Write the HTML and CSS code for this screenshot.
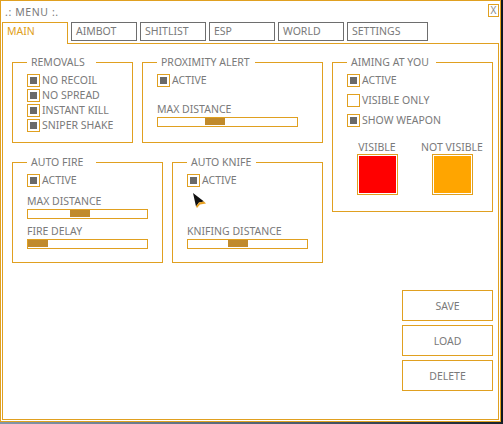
FILE: index.html
```html
<!DOCTYPE html>
<html>
<head>
<meta charset="utf-8">
<link rel="stylesheet" href="styles.css">
</head>
<body>
<div class="window">
  <div class="titlebar">
    <span class="title">.: MENU :.</span>
    <span class="close">X</span>
  </div>
  <div class="tabs">
    <div class="tab active">MAIN</div>
    <div class="tab">AIMBOT</div>
    <div class="tab">SHITLIST</div>
    <div class="tab">ESP</div>
    <div class="tab">WORLD</div>
    <div class="tab wide">SETTINGS</div>
  </div>
  <div class="panel">
    <div class="col-left">
      <div class="row">
        <section class="group g-removals">
          <div class="legend">REMOVALS</div>
          <div class="checks">
            <div class="check"><span class="box on"></span><span>NO RECOIL</span></div>
            <div class="check"><span class="box on"></span><span>NO SPREAD</span></div>
            <div class="check"><span class="box on"></span><span>INSTANT KILL</span></div>
            <div class="check"><span class="box on"></span><span>SNIPER SHAKE</span></div>
          </div>
        </section>
        <section class="group g-prox">
          <div class="legend legend-prox">PROXIMITY ALERT</div>
          <div class="checks">
            <div class="check"><span class="box on"></span><span>ACTIVE</span></div>
          </div>
          <div class="label l-prox">MAX DISTANCE</div>
          <div class="slider s-wide"><div class="thumb" style="margin-left:47px"></div></div>
        </section>
      </div>
      <div class="row row-bottom">
        <section class="group g-auto">
          <div class="legend">AUTO FIRE</div>
          <div class="checks">
            <div class="check"><span class="box on"></span><span>ACTIVE</span></div>
          </div>
          <div class="label l-first">MAX DISTANCE</div>
          <div class="slider"><div class="thumb" style="margin-left:42px"></div></div>
          <div class="label l-second">FIRE DELAY</div>
          <div class="slider"><div class="thumb" style="margin-left:0px"></div></div>
        </section>
        <section class="group g-auto">
          <div class="legend">AUTO KNIFE</div>
          <div class="checks">
            <div class="check"><span class="box on"></span><span>ACTIVE</span></div>
          </div>
          <div class="spacer">
            <svg class="cursor" width="14" height="15" viewBox="0 0 14 15">
              <polygon points="0,0 11,8.5 6,9.5 3,13.5" fill="#111"/>
              <polygon points="3,13.5 6,9.5 11,8.5 13,10.5 7,11.5 4,15" fill="#e8a020"/>
            </svg>
          </div>
          <div class="label">KNIFING DISTANCE</div>
          <div class="slider"><div class="thumb" style="margin-left:40px"></div></div>
        </section>
      </div>
    </div>
    <div class="col-right">
      <section class="group g-aim">
        <div class="legend legend-aim">AIMING AT YOU</div>
        <div class="checks spaced">
          <div class="check"><span class="box on"></span><span>ACTIVE</span></div>
          <div class="check"><span class="box"></span><span>VISIBLE ONLY</span></div>
          <div class="check"><span class="box on"></span><span>SHOW WEAPON</span></div>
        </div>
        <div class="swatches">
          <div class="swatch">
            <span class="swatch-label">VISIBLE</span>
            <span class="color red"></span>
          </div>
          <div class="swatch">
            <span class="swatch-label">NOT VISIBLE</span>
            <span class="color orange"></span>
          </div>
        </div>
      </section>
      <div class="buttons">
        <div class="btn">SAVE</div>
        <div class="btn">LOAD</div>
        <div class="btn">DELETE</div>
      </div>
    </div>
  </div>
</div>
</body>
</html>
```

FILE: styles.css
```css
* {
  box-sizing: border-box;
}

html, body {
  margin: 0;
  height: 424px;
  overflow: hidden;
}

body {
  background: linear-gradient(90deg, #8396a8 0%, #4a5a69 60%, #18212b 100%);
  font-family: "Noto Sans", "DejaVu Sans", sans-serif;
  font-size: 10.5px;
  color: #7a7a7a;
}

.window {
  width: 501px;
  height: 422px;
  border: 1px solid #e0a020;
  background: #fff;
  padding: 0 1px 1px 1px;
  display: flex;
  flex-direction: column;
  box-shadow: 2px 0 0 #101820, 3px 0 0 #0c131a;
}

.titlebar {
  height: 21px;
  flex-shrink: 0;
  display: flex;
  justify-content: space-between;
  align-items: flex-start;
  padding-left: 3px;
}

.title {
  margin-top: 4px;
  line-height: 14px;
  letter-spacing: 0.6px;
}

.close {
  margin-top: 3px;
  width: 11px;
  height: 13px;
  border: 1px solid #e0a020;
  line-height: 11px;
  text-align: center;
  font-size: 10px;
  color: #888888;
}

.tabs {
  display: flex;
  gap: 3px;
  height: 22px;
  flex-shrink: 0;
  margin-bottom: -1px;
  align-items: flex-start;
  position: relative;
  z-index: 1;
}

.tab {
  width: 66px;
  height: 19px;
  border: 1px solid #6e6e6e;
  line-height: 17px;
  padding-left: 4px;
  white-space: nowrap;
}

.tab.wide {
  width: 81px;
}

.tab.active {
  height: 22px;
  border-color: #e0a020;
  border-bottom: none;
  color: #e0a020;
  background: #fff;
}

.panel {
  flex: 1;
  border: 1px solid #e0a020;
  display: flex;
  gap: 9px;
  padding: 18px 0 0 9px;
}

.col-left {
  width: 311px;
  display: flex;
  flex-direction: column;
}

.col-right {
  width: 161px;
  display: flex;
  flex-direction: column;
}

.row {
  display: flex;
  gap: 9px;
}

.row-bottom {
  margin-top: 19px;
}

.group {
  border: 1px solid #e0a020;
  padding: 0 14px;
  display: flex;
  flex-direction: column;
}

.legend {
  margin-top: -8px;
  padding-left: 4px;
  background: #fff;
  line-height: 14px;
  width: 69px;
  white-space: nowrap;
}

.legend-prox {
  width: 98px;
}

.legend-aim {
  width: 89px;
}

.g-removals {
  width: 121px;
  padding-bottom: 9px;
}

.g-prox {
  width: 181px;
}

.g-auto {
  width: 151px;
  padding-bottom: 13px;
}

.g-aim {
  width: 161px;
  padding-right: 6px;
  padding-bottom: 16px;
}

.checks {
  margin-top: 4px;
  display: flex;
  flex-direction: column;
}

.checks.spaced {
  gap: 5px;
}

.check {
  display: flex;
  align-items: center;
  height: 15px;
  line-height: 15px;
  gap: 2px;
  white-space: nowrap;
}

.box {
  width: 13px;
  height: 13px;
  flex-shrink: 0;
  border: 1px solid #e0a020;
  padding: 2px;
}

.box.on::after {
  content: "";
  display: block;
  width: 7px;
  height: 7px;
  background: #6a6a6a;
}

.label {
  line-height: 14px;
  white-space: nowrap;
}

.l-prox {
  margin-top: 14px;
}

.l-first {
  margin-top: 6px;
}

.l-second {
  margin-top: 5px;
}

.spacer {
  height: 36px;
  padding: 5px 0 0 6px;
}

.cursor {
  display: block;
}

.slider {
  width: 121px;
  height: 10px;
  margin-top: 1px;
  border: 1px solid #e0a020;
}

.slider.s-wide {
  width: 141px;
}

.thumb {
  width: 20px;
  height: 7px;
  background: #c08a2c;
}

.swatches {
  display: flex;
  gap: 15px;
  margin-top: 12px;
}

.swatch {
  width: 60px;
  flex-shrink: 0;
  display: flex;
  flex-direction: column;
  align-items: center;
}

.swatch-label {
  line-height: 14px;
  white-space: nowrap;
}

.color {
  display: block;
  width: 41px;
  height: 41px;
  border: 1px solid #e0a020;
  padding: 1px;
  background-clip: content-box;
}

.color.red {
  background-color: #ff0000;
}

.color.orange {
  background-color: #ffa500;
}

.buttons {
  margin-top: 78px;
  display: flex;
  flex-direction: column;
  align-items: flex-end;
  gap: 4px;
}

.btn {
  width: 91px;
  height: 31px;
  border: 1px solid #e0a020;
  display: flex;
  align-items: center;
  justify-content: center;
}
```
